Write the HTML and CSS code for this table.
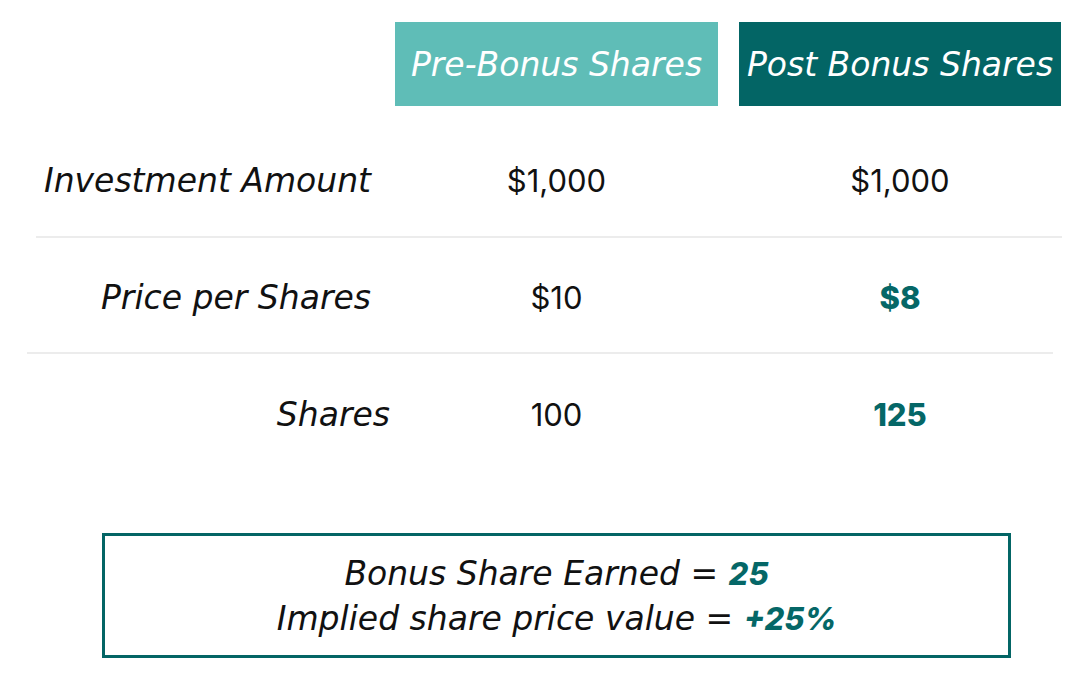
FILE: index.html
```html
<!DOCTYPE html>
<html>
<head>
<meta charset="utf-8">
<link rel="stylesheet" href="styles.css">
</head>
<body>
<div class="page">
  <div class="head">
    <div></div>
    <div class="hcell pre">Pre-Bonus Shares</div>
    <div class="hcell post">Post Bonus Shares</div>
  </div>
  <div class="row r1">
    <div class="label">Investment Amount</div>
    <div class="val">$1,000</div>
    <div class="val">$1,000</div>
  </div>
  <div class="divider d1"></div>
  <div class="row r2">
    <div class="label">Price per Shares</div>
    <div class="val">$10</div>
    <div class="val strong">$8</div>
  </div>
  <div class="divider d2"></div>
  <div class="row r3">
    <div class="label wide">Shares</div>
    <div class="val">100</div>
    <div class="val strong">125</div>
  </div>
  <div class="summary">
    <div class="line">Bonus Share Earned = <b class="hl">25</b></div>
    <div class="line">Implied share price value = <b class="hl">+25%</b></div>
  </div>
</div>
</body>
</html>
```
FILE: styles.css
```css
html, body {
  margin: 0;
  padding: 0;
  background: #ffffff;
}
body {
  font-family: "DejaVu Sans", "Inter", sans-serif;
  color: #111111;
  width: 1080px;
  height: 684px;
  overflow: hidden;
}
.page {
  padding-top: 22px;
}
.head,
.row {
  display: grid;
  grid-template-columns: 374px 323px 322px;
  column-gap: 21px;
}
.head {
  height: 84px;
}
.hcell {
  display: flex;
  align-items: center;
  justify-content: center;
  color: #ffffff;
  font-style: italic;
  font-size: 33px;
}
.pre { background: #5fbdb7; }
.post { background: #036565; }
.row {
  align-items: center;
  font-size: 33px;
}
.r1 { margin-top: 18px; height: 112px; }
.r2 { height: 114px; padding-top: 4px; box-sizing: border-box; }
.r3 { height: 118px; padding-top: 2px; box-sizing: border-box; }
.label {
  font-style: italic;
  text-align: right;
  padding-right: 3px;
}
.label.wide {
  margin-right: -19px;
}
.val {
  text-align: center;
  font-family: "Inter", "DejaVu Sans", sans-serif;
  font-size: 31px;
}
.strong {
  font-weight: 800;
  color: #056767;
}
.divider {
  height: 2px;
  background: #ececec;
}
.d1 { margin-left: 36px; width: 1026px; }
.d2 { margin-left: 27px; width: 1026px; }
.summary {
  margin-top: 61px;
  margin-left: 102px;
  width: 909px;
  height: 125px;
  box-sizing: border-box;
  border: 3px solid #036565;
  display: flex;
  flex-direction: column;
  justify-content: center;
  align-items: center;
}
.line {
  font-style: italic;
  font-size: 33px;
  line-height: 45px;
}
.hl {
  font-family: "Inter", "DejaVu Sans", sans-serif;
  font-weight: 800;
  font-size: 31px;
  color: #056767;
}
```
